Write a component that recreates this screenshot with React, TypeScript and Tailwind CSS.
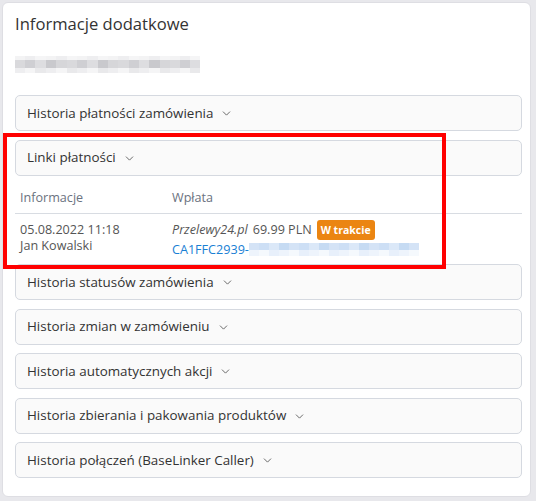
import React from "react";
import { ChevronDown } from "lucide-react";

const font = { fontFamily: '"Open Sans", "Noto Sans", sans-serif' };

function Row({ label, children }: { label: string; children?: React.ReactNode }) {
  return (
    <div className="rounded-[5px] border border-[#d5d9e0] bg-[#fafafa]">
      <div className="flex h-[34px] items-center gap-[7px] pl-[11px] text-[13.4px] text-[#333]">
        <span>{label}</span>
        <ChevronDown size={13} strokeWidth={1.6} className="text-[#555] mt-[1px]" />
      </div>
      {children}
    </div>
  );
}

function Blur({ blocks, h, colors }: { blocks: number[]; h: number; colors: string[] }) {
  return (
    <div className="flex">
      {blocks.map((w, i) => (
        <div key={i} style={{ width: w, height: h, background: colors[i % colors.length] }} />
      ))}
    </div>
  );
}

const B1 = [10, 10, 11, 10, 11, 10, 10, 11, 10, 10, 11, 10, 10, 11, 10, 10, 10, 10];
const B2 = [10, 10, 10, 10, 10, 10, 10, 10, 10, 10, 10, 10, 10, 10, 10, 10, 10];

export default function App() {
  return (
    <div className="relative w-[536px] h-[501px] bg-[#e8e8ec] pt-[2px] pl-[2px]" style={font}>
      <div className="w-[529px] h-[495px] bg-white rounded-[6px] border border-[#dedee3] pl-[12px] pr-[8px]">
        <div className="pt-[9px] text-[16.6px] leading-[24px] text-[#333]">Informacje dodatkowe</div>
        <div className="mt-[20px] flex flex-col">
          <Blur blocks={B1} h={4} colors={["#f3f3f4", "#eeeef0", "#f5f5f6"]} />
          <Blur blocks={B1} h={8} colors={["#d9d9dc", "#cfcfd3", "#dddde0", "#c9c9cd", "#d6d6d9"]} />
          <Blur blocks={B1} h={5} colors={["#eeeef0", "#f5f5f6", "#e9e9eb"]} />
        </div>
        <div className="mt-[22px] flex flex-col gap-[8.5px]">
          <Row label="Historia płatności zamówienia" />
          <div className="-mb-[2px]">
            <Row label="Linki płatności" />
            <div className="text-[12.6px] text-[#555]">
              <div className="flex h-[38px] items-end pb-[5px] border-b border-[#d8dce2] text-[#6b7280]">
                <div className="w-[157px] pl-[5px]">Informacje</div>
                <div>Wpłata</div>
              </div>
              <div className="flex pt-[8px] leading-[16px]">
                <div className="w-[157px] pl-[5px]">
                  <div>05.08.2022 11:18</div>
                  <div>Jan Kowalski</div>
                </div>
                <div className="-mt-[2px]">
                  <div className="flex items-center gap-[6px] h-[20px]">
                    <span className="italic">Przelewy24.pl</span>
                    <span className="-ml-[1px]">69.99 PLN</span>
                    <span className="-ml-[1px] rounded-[3px] bg-[#eb8512] px-[4px] h-[20px] leading-[20px] text-[10.5px] font-bold text-white">W trakcie</span>
                  </div>
                  <div className="flex items-center mt-[2px]">
                    <span className="text-[#1a7fd4]">CA1FFC2939-</span>
                    <div className="flex flex-col">
                      <Blur blocks={B2} h={7} colors={["#d4e3f6", "#cddff5", "#dbe8f8", "#c6dbf3"]} />
                      <Blur blocks={B2} h={6} colors={["#eef4fc", "#f5f9fd", "#e8f0fb"]} />
                    </div>
                  </div>
                </div>
              </div>
            </div>
          </div>
          <Row label="Historia statusów zamówienia" />
          <Row label="Historia zmian w zamówieniu" />
          <Row label="Historia automatycznych akcji" />
          <Row label="Historia zbierania i pakowania produktów" />
          <Row label="Historia połączeń (BaseLinker Caller)" />
        </div>
      </div>
      <div className="absolute left-[3px] top-[133px] w-[443px] h-[136px] border-[4px] border-[#ff0000]" />
    </div>
  );
}
